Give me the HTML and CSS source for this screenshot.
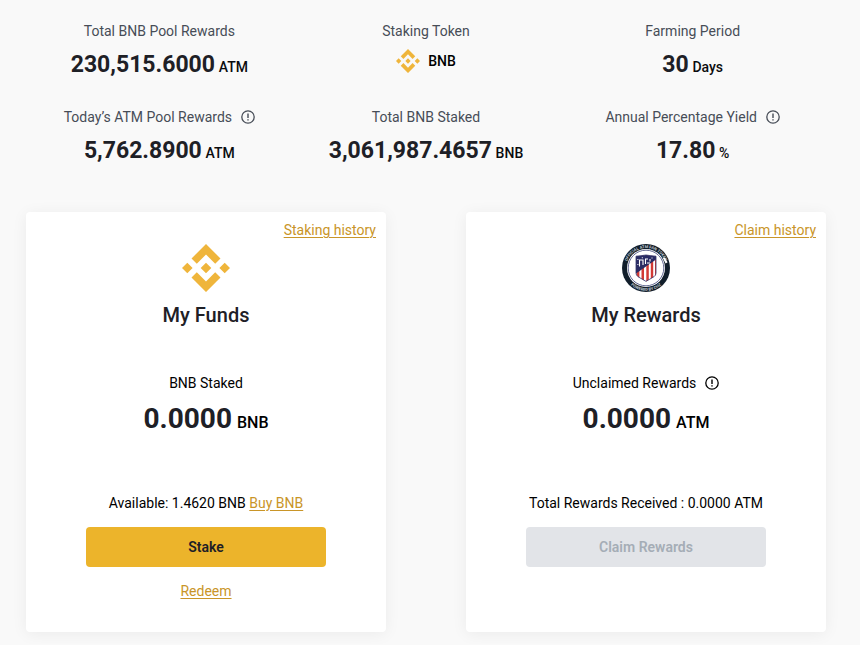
FILE: index.html
```html
<!DOCTYPE html>
<html lang="en">
<head>
<meta charset="utf-8">
<meta name="viewport" content="width=device-width, initial-scale=1">
<title>BNB Pool</title>
<link rel="stylesheet" href="styles.css">
</head>
<body>
<svg class="defs" aria-hidden="true">
  <symbol id="bnb" viewBox="0 0 48 48">
    <path d="M24 0 38.5 14.5 33.2 19.8 24 10.6 14.8 19.8 9.5 14.5ZM0 24 5.3 18.7 10.6 24 5.3 29.3ZM18.7 24 24 18.7 29.3 24 24 29.3ZM37.4 24 42.7 18.7 48 24 42.7 29.3ZM24 48 9.5 33.5 14.8 28.2 24 37.4 33.2 28.2 38.5 33.5Z" fill="#efb53b"/>
  </symbol>
  <symbol id="info" viewBox="0 0 14 14">
    <circle cx="7" cy="7" r="6.2" fill="none" stroke="currentColor" stroke-width="1.3"/>
    <path d="M7 3.4V8M7 9.2V10.6" fill="none" stroke="currentColor" stroke-width="1.4"/>
  </symbol>
</svg>
<main class="page">
  <section class="stats">
    <div class="stat">
      <div class="label">Total BNB Pool Rewards</div>
      <div class="value"><strong>230,515.6000</strong> <span class="unit">ATM</span></div>
    </div>
    <div class="stat">
      <div class="label">Staking Token</div>
      <div class="token"><svg class="token-icon" aria-hidden="true"><use href="#bnb"/></svg>BNB</div>
    </div>
    <div class="stat">
      <div class="label">Farming Period</div>
      <div class="value"><strong>30</strong> <span class="unit">Days</span></div>
    </div>
    <div class="stat">
      <div class="label">Today’s ATM Pool Rewards<svg class="info" aria-hidden="true"><use href="#info"/></svg></div>
      <div class="value"><strong>5,762.8900</strong> <span class="unit">ATM</span></div>
    </div>
    <div class="stat">
      <div class="label">Total BNB Staked</div>
      <div class="value"><strong>3,061,987.4657</strong> <span class="unit">BNB</span></div>
    </div>
    <div class="stat">
      <div class="label">Annual Percentage Yield<svg class="info" aria-hidden="true"><use href="#info"/></svg></div>
      <div class="value"><strong>17.80</strong> <span class="unit">%</span></div>
    </div>
  </section>

  <section class="cards">
    <article class="card">
      <a class="link history" href="#">Staking history</a>
      <svg class="logo" aria-hidden="true"><use href="#bnb"/></svg>
      <h2 class="title">My Funds</h2>
      <div class="caption">BNB Staked</div>
      <div class="amount"><strong>0.0000</strong> <span class="amount-unit">BNB</span></div>
      <div class="note">Available: 1.4620 BNB <a class="link" href="#">Buy BNB</a></div>
      <button class="button" type="button">Stake</button>
      <a class="link redeem" href="#">Redeem</a>
    </article>

    <article class="card">
      <a class="link history" href="#">Claim history</a>
      <svg class="logo" viewBox="0 0 48 48" aria-hidden="true">
        <defs>
          <path id="arc-top" d="M4 24A20 20 0 0 1 44 24"/>
          <path id="arc-bottom" d="M1.2 24A22.8 22.8 0 0 0 46.8 24"/>
          <clipPath id="shield"><path d="M14 12.2Q19 11.8 24 11Q29 11.8 34 12.2V29Q34 31.3 32 32.7L24 37.4 16 32.7Q14 31.3 14 29Z"/></clipPath>
        </defs>
        <circle cx="24" cy="24" r="24" fill="#111e2b"/>
        <circle cx="24" cy="24" r="19" fill="#fff"/>
        <circle cx="24" cy="24" r="17.8" fill="none" stroke="#535a88" stroke-width=".9"/>
        <text class="crest-text"><textPath href="#arc-top" startOffset="50%">OFFICIAL ATM FAN TOKEN</textPath></text>
        <text class="crest-text"><textPath href="#arc-bottom" startOffset="50%">POWERED BY CHZ</textPath></text>
        <path d="M40.8 14 42.6 13.4 45.6 18.2 43.6 19.6ZM43 16.4 45.4 15" fill="#fff"/>
        <g clip-path="url(#shield)">
          <path d="M14 10H34V38H14Z" fill="#fff"/>
          <path d="M14.5 10H17.4V38H14.5ZM19.5 10H22V38H19.5ZM24.3 10H26.8V38H24.3ZM28.8 10H31.2V38H28.8ZM33 10H34V38H33Z" fill="#d23a35"/>
          <path d="M14 10H34V15.5L14 29.5Z" fill="#292b64"/>
          <path d="M17.5 15.5V22.5M17.5 16H21V21M23.5 14.5V20M23.5 15H26M25 19H28M28 15V17.5" fill="none" stroke="#fff" stroke-width="1.1"/>
          <path d="M15.4 15h1v1h-1zM15.4 20h1v1h-1zM19.8 13.2h1v1h-1zM29.5 13.4h1v1h-1z" fill="#fff"/>
        </g>
        <path d="M14 12.2Q19 11.8 24 11Q29 11.8 34 12.2V29Q34 31.3 32 32.7L24 37.4 16 32.7Q14 31.3 14 29Z" fill="none" stroke="#33376c" stroke-width=".8"/>
      </svg>
      <h2 class="title">My Rewards</h2>
      <div class="caption">Unclaimed Rewards<svg class="info" aria-hidden="true"><use href="#info"/></svg></div>
      <div class="amount"><strong>0.0000</strong> <span class="amount-unit">ATM</span></div>
      <div class="note">Total Rewards Received : 0.0000 ATM</div>
      <button class="button" type="button" disabled>Claim Rewards</button>
    </article>
  </section>
</main>
</body>
</html>
```
FILE: styles.css
```css
* {
  box-sizing: border-box;
}

body {
  margin: 0;
  background: #f9f9f9;
  color: #000;
  font: 14px/20px Roboto, "Liberation Sans", sans-serif;
}

.defs {
  position: absolute;
  width: 0;
  height: 0;
}

.page {
  padding: 21px 34px 12px 26px;
}

.stats {
  display: grid;
  grid-template-columns: repeat(3, 1fr);
  row-gap: 26px;
  text-align: center;
}

.label {
  color: #474d57;
}

.info {
  width: 14px;
  height: 14px;
  margin-left: 9px;
  vertical-align: -2px;
}

.value {
  margin-top: 8px;
  font-size: 23px;
  line-height: 32px;
  color: #1e2026;
}

.unit {
  margin-left: -2px;
  font-size: 14px;
  font-weight: 500;
  line-height: 20px;
  color: #0b0c0e;
}

.token {
  display: flex;
  align-items: center;
  justify-content: center;
  gap: 8px;
  height: 40px;
  font-weight: 500;
}

.token-icon {
  width: 24px;
  height: 24px;
}

.cards {
  display: grid;
  grid-template-columns: 1fr 1fr;
  gap: 80px;
  margin-top: 45px;
}

.card {
  display: flex;
  flex-direction: column;
  align-items: center;
  padding: 8px 10px 31px;
  border-radius: 4px;
  background: #fff;
  box-shadow: 0 2px 16px rgba(0, 0, 0, 0.06);
}

.link {
  color: #c99528;
  text-decoration: underline;
  text-underline-offset: 2px;
}

.history {
  align-self: flex-end;
}

.logo {
  width: 48px;
  height: 48px;
  margin-top: 4px;
}

.crest-text {
  font-size: 4px;
  font-weight: 700;
  fill: #c3cbd3;
  text-anchor: middle;
}

.title {
  margin: 9px 0 0;
  font-size: 20px;
  font-weight: 500;
  line-height: 28px;
  color: #1e2026;
}

.caption {
  margin-top: 44px;
}

.amount {
  margin-top: 8px;
  font-size: 28px;
  line-height: 36px;
  color: #1e2026;
}

.amount-unit {
  margin-left: -2px;
  font-size: 16px;
  font-weight: 500;
  line-height: 20px;
  color: #000;
}

.note {
  margin-top: 56px;
}

.button {
  width: 240px;
  max-width: 100%;
  height: 40px;
  margin-top: 14px;
  border: 0;
  border-radius: 4px;
  background: #ecb42b;
  color: #1e2026;
  font: inherit;
  font-weight: 600;
}

.button:disabled {
  background: #e2e4e8;
  color: #a5adb6;
}

.redeem {
  margin-top: 14px;
}
```
